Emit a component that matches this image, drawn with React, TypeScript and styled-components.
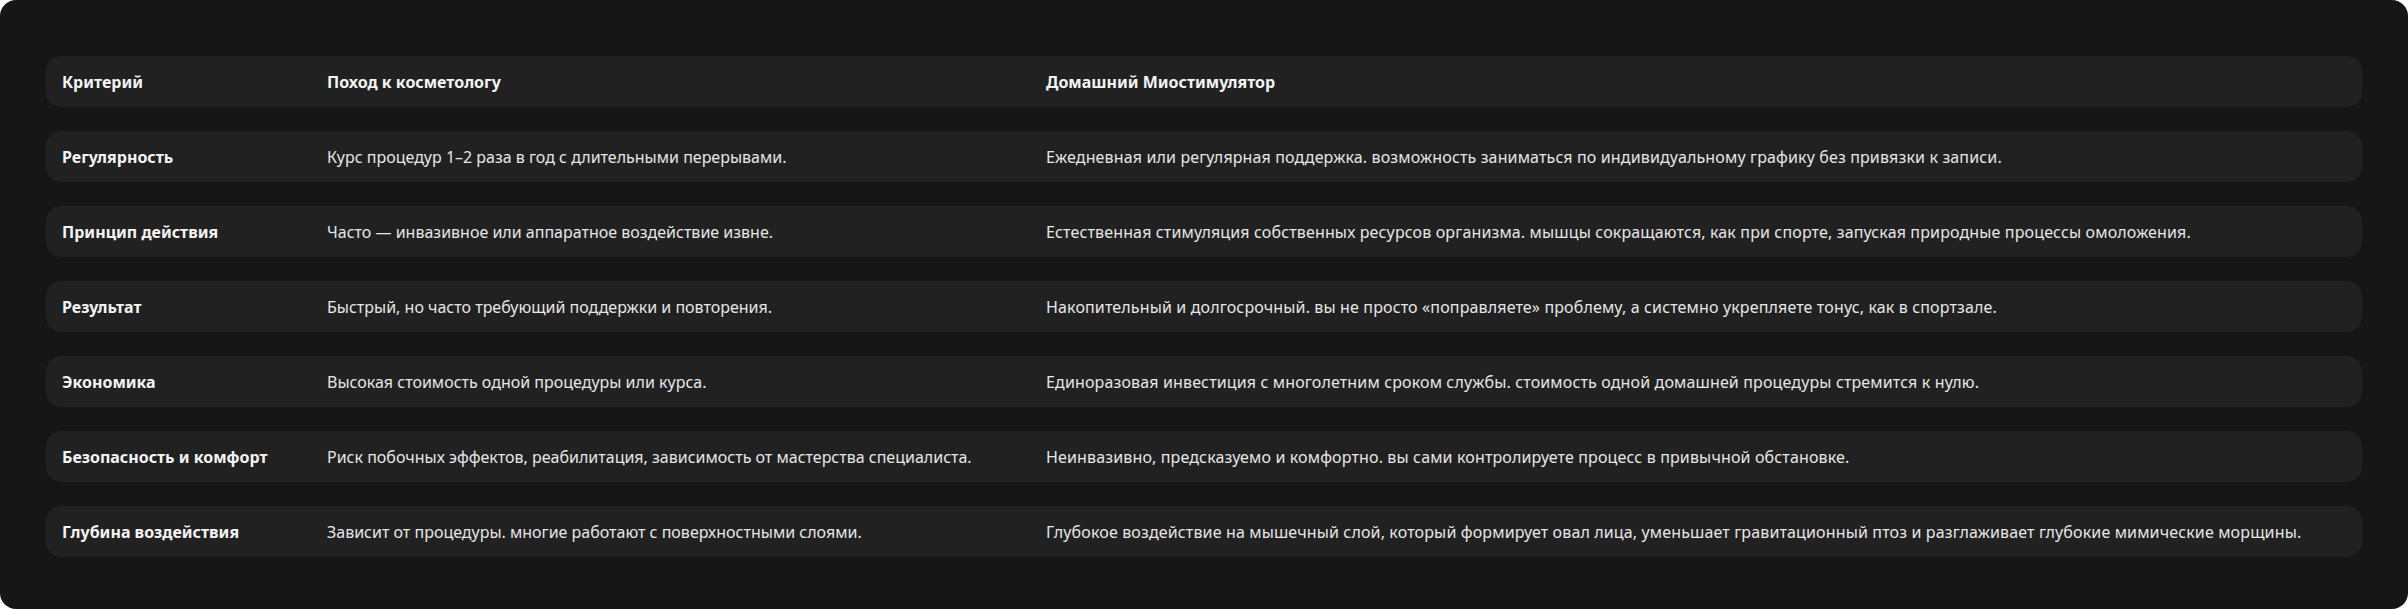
import styled, { createGlobalStyle } from "styled-components";

const GlobalStyle = createGlobalStyle`
  html, body {
    margin: 0;
    padding: 0;
    background: #ffffff;
  }
  body {
    font-family: "Noto Sans", "Open Sans", sans-serif;
    -webkit-font-smoothing: antialiased;
  }
`;

const Card = styled.section`
  box-sizing: border-box;
  width: 2408px;
  height: 609px;
  padding: 56px 46px 52px;
  background: #161616;
  border-radius: 16px;
  display: flex;
  flex-direction: column;
  gap: 24px;
`;

const Row = styled.div`
  display: grid;
  grid-template-columns: 265px 719px 1fr;
  align-items: center;
  height: 51px;
  padding: 0 16px;
  background: #212121;
  border-radius: 15px;
`;

const Cell = styled.div<{ $bold?: boolean; $wide?: boolean }>`
  font-size: 16px;
  line-height: 22px;
  font-weight: ${({ $bold }) => ($bold ? 700 : 400)};
  letter-spacing: ${({ $wide }) => ($wide ? "0.14px" : "0")};
  color: ${({ $bold }) => ($bold ? "#f4f4f4" : "#e6e6e6")};
  white-space: nowrap;
`;

const header = ["Критерий", "Поход к косметологу", "Домашний Миостимулятор"];

const rows: [string, string, string][] = [
  [
    "Регулярность",
    "Курс процедур 1–2 раза в год с длительными перерывами.",
    "Ежедневная или регулярная поддержка. возможность заниматься по индивидуальному графику без привязки к записи.",
  ],
  [
    "Принцип действия",
    "Часто — инвазивное или аппаратное воздействие извне.",
    "Естественная стимуляция собственных ресурсов организма. мышцы сокращаются, как при спорте, запуская природные процессы омоложения.",
  ],
  [
    "Результат",
    "Быстрый, но часто требующий поддержки и повторения.",
    "Накопительный и долгосрочный. вы не просто «поправляете» проблему, а системно укрепляете тонус, как в спортзале.",
  ],
  [
    "Экономика",
    "Высокая стоимость одной процедуры или курса.",
    "Единоразовая инвестиция с многолетним сроком службы. стоимость одной домашней процедуры стремится к нулю.",
  ],
  [
    "Безопасность и комфорт",
    "Риск побочных эффектов, реабилитация, зависимость от мастерства специалиста.",
    "Неинвазивно, предсказуемо и комфортно. вы сами контролируете процесс в привычной обстановке.",
  ],
  [
    "Глубина воздействия",
    "Зависит от процедуры. многие работают с поверхностными слоями.",
    "Глубокое воздействие на мышечный слой, который формирует овал лица, уменьшает гравитационный птоз и разглаживает глубокие мимические морщины.",
  ],
];

export default function App() {
  return (
    <>
      <GlobalStyle />
      <Card>
        <Row>
          <Cell $bold>{header[0]}</Cell>
          <Cell $bold>{header[1]}</Cell>
          <Cell $bold>{header[2]}</Cell>
        </Row>
        {rows.map(([name, salon, home]) => (
          <Row key={name}>
            <Cell $bold>{name}</Cell>
            <Cell>{salon}</Cell>
            <Cell $wide>{home}</Cell>
          </Row>
        ))}
      </Card>
    </>
  );
}
